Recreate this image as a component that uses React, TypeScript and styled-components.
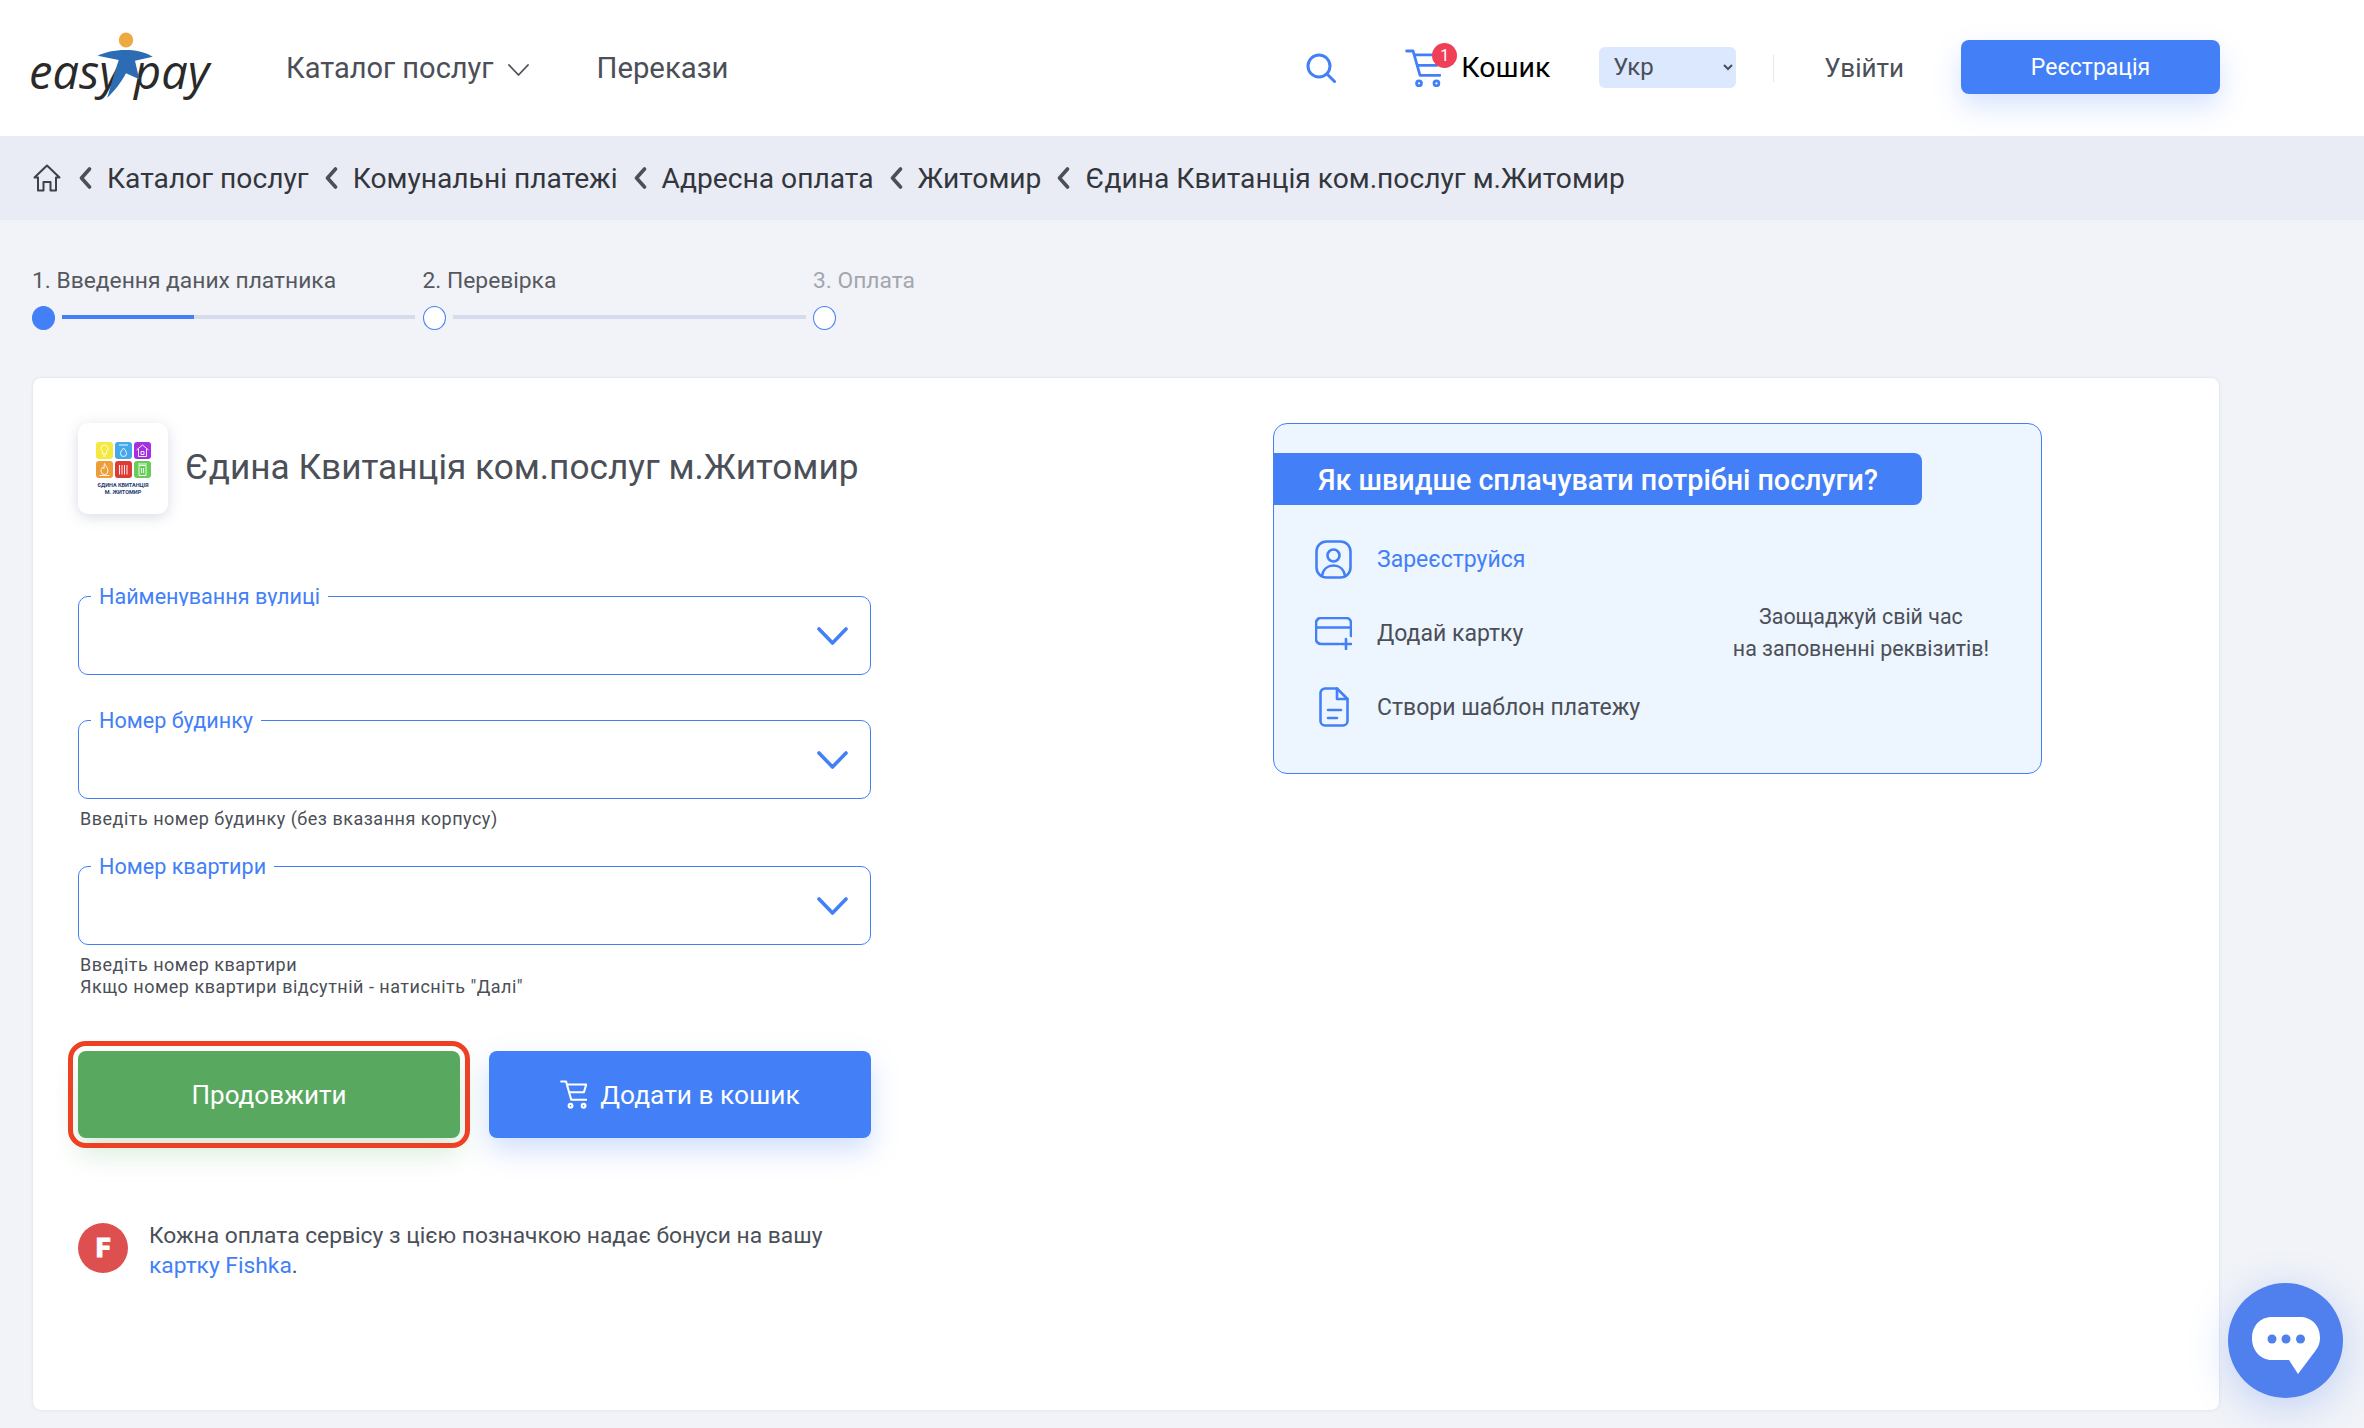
import * as React from 'react';
import styled, { createGlobalStyle } from 'styled-components';

const Global = createGlobalStyle`
    html, body {
        margin: 0;
        background: #f1f3f8;
        width: 2364px;
        height: 1428px;
        overflow: hidden;
    }
    * {
        box-sizing: border-box;
    }
    body {
        font-family: Roboto, 'Noto Sans', sans-serif;
        color: #4b4f57;
    }
`;

const BLUE = '#4380f7';

const CartGlyph = ({ color, size }: { color: string; size: number }) => (
    <svg width={size} height={size * 1.05} viewBox="0 0 36 38" fill="none" stroke={color} strokeWidth="2.8" strokeLinecap="round" strokeLinejoin="round">
        <path d="M1.5 2h6.5l7 24.500h20" />
        <path d="M9.500 6H35l-3 10.500H12.500" />
        <circle cx="14" cy="34.500" r="2.500" />
        <circle cx="31.500" cy="34.500" r="2.500" />
    </svg>
);

const Chevron = () => (
    <svg width="14" height="24" viewBox="0 0 14 24" fill="none" stroke="#4b4f57" strokeWidth="3.600" strokeLinecap="round" strokeLinejoin="round">
        <path d="M11.500 3L3.500 12l8 9" />
    </svg>
);

const SelectArrow = () => (
    <svg width="31" height="18" viewBox="0 0 31 18" fill="none" stroke={BLUE} strokeWidth="3.600" strokeLinecap="round" strokeLinejoin="round">
        <path d="M2 2l13.500 14L29 2" />
    </svg>
);

const tileIcons = [
    { color: '#f5e93f', d: 'M8.500 3a3.500 3.500 0 0 1 2 6.400V12h-4V9.400a3.500 3.500 0 0 1 2-6.400zM7 14h3' },
    { color: '#45a8e8', d: 'M4 3h9M8.500 6c2 2.400 3 4 3 5.500a3 3 0 0 1-6 0C5.500 10 6.500 8.400 8.500 6z' },
    { color: '#a42fe0', d: 'M2.500 8l6-5 6 5M4.500 7v7.500h8V7M7 9.500h3v3H7z' },
    { color: '#ee9d38', d: 'M8.500 2.500c1 3 3.500 4 3.500 7.500a3.500 3.500 0 0 1-7 0c0-2 1-2.500 1.500-4 .5 1 1 1.500 1.500 1.500 0-2 0-3.500.5-5zM3.500 14.500h10' },
    { color: '#df3b36', d: 'M4.500 4v9.500M7 4v9.500M9.500 4v9.500M12 4v9.500' },
    { color: '#67cd58', d: 'M5 4.500h7v10H5zM4 3h9M7.500 7v5M9.500 7v5' },
];

const App = () => (
    <>
        <Global />
        <Header>
            <Logo viewBox="0 0 180 88" width="180" height="88" aria-label="easypay">
                <LogoWord x="-3" y="65">easy</LogoWord>
                <LogoWord x="102" y="65">pay</LogoWord>
                <ellipse cx="94" cy="16" rx="7.200" ry="7.600" fill="#eeaa42" />
                <path d="M65.700 31.700C78 25.500 104 22.500 120.700 32.700L103 36.700L107.300 55.300L94 49.300C89 59 82 67.500 75.300 73.700C79 61 83 47 86.700 36Z" fill="#2c6cb4" />
            </Logo>
            <NavLink>Каталог послуг</NavLink>
            <NavCaret width="21" height="12" viewBox="0 0 21 12" fill="none" stroke="#4b4f57" strokeWidth="1.800" strokeLinecap="round" strokeLinejoin="round">
                <path d="M1 1l9.500 10L20 1" />
            </NavCaret>
            <NavTransfer>Перекази</NavTransfer>
            <HeaderRight>
                <svg width="30" height="30" viewBox="0 0 30 30" fill="none" stroke={BLUE} strokeWidth="3" strokeLinecap="round">
                    <circle cx="13" cy="13" r="11" />
                    <path d="M21 21l7.500 7.500" />
                </svg>
                <CartLink>
                    <CartGlyph color={BLUE} size={36} />
                    <Badge>1</Badge>
                    <CartText>Кошик</CartText>
                </CartLink>
                <Lang defaultValue="ua">
                    <option value="ua">Укр</option>
                </Lang>
                <HeaderDivider />
                <Login>Увійти</Login>
                <SignUp>Реєстрація</SignUp>
            </HeaderRight>
        </Header>

        <Crumbs>
            <HomeIcon width="28" height="28" viewBox="0 0 28 28" fill="none" stroke="#3d4148" strokeWidth="2" strokeLinecap="round" strokeLinejoin="round">
                <path d="M14 1.500L1.500 13.500H5V26.500H10.500V18H17.500V26.500H23V13.500H26.500Z" />
            </HomeIcon>
            {['Каталог послуг', 'Комунальні платежі', 'Адресна оплата', 'Житомир', 'Єдина Квитанція ком.послуг м.Житомир'].map((c) => (
                <React.Fragment key={c}>
                    <Chevron />
                    <Crumb>{c}</Crumb>
                </React.Fragment>
            ))}
        </Crumbs>

        <Steps>
            <Step>
                <StepLabel>1. Введення даних платника</StepLabel>
                <StepTrack>
                    <StepDot $active />
                    <StepLine $fill={37.500} />
                </StepTrack>
            </Step>
            <Step>
                <StepLabel>2. Перевірка</StepLabel>
                <StepTrack>
                    <StepDot />
                    <StepLine $fill={0} />
                </StepTrack>
            </Step>
            <Step>
                <StepLabel $muted>3. Оплата</StepLabel>
                <StepTrack>
                    <StepDot />
                </StepTrack>
            </Step>
        </Steps>

        <Card>
            <FormColumn>
                <ServiceHead>
                    <Tile>
                        <TileGrid>
                            {tileIcons.map((t) => (
                                <TileSwatch key={t.color} $color={t.color}>
                                    <svg width="17" height="17" viewBox="0 0 17 17" fill="none" stroke="#ffffff" strokeWidth="0.900" strokeLinejoin="round">
                                        <path d={t.d} />
                                    </svg>
                                </TileSwatch>
                            ))}
                        </TileGrid>
                        <TileText>
                            ЄДИНА КВИТАНЦІЯ
                            <br />
                            М. ЖИТОМИР
                        </TileText>
                    </Tile>
                    <ServiceTitle>Єдина Квитанція ком.послуг м.Житомир</ServiceTitle>
                </ServiceHead>

                <FieldGroup $top={82}>
                    <SelectBox>
                        <FloatLabel $clipped>Найменування вулиці</FloatLabel>
                        <SelectArrow />
                    </SelectBox>
                </FieldGroup>
                <FieldGroup $top={45}>
                    <SelectBox>
                        <FloatLabel>Номер будинку</FloatLabel>
                        <SelectArrow />
                    </SelectBox>
                    <Help>Введіть номер будинку (без вказання корпусу)</Help>
                </FieldGroup>
                <FieldGroup $top={36}>
                    <SelectBox>
                        <FloatLabel>Номер квартири</FloatLabel>
                        <SelectArrow />
                    </SelectBox>
                    <Help>
                        Введіть номер квартири
                        <br />
                        Якщо номер квартири відсутній - натисніть "Далі"
                    </Help>
                </FieldGroup>

                <Actions>
                    <ContinueButton>Продовжити</ContinueButton>
                    <AddButton>
                        <CartGlyph color="#ffffff" size={27} />
                        Додати в кошик
                    </AddButton>
                </Actions>

                <Bonus>
                    <BonusMark>F</BonusMark>
                    <BonusText>
                        Кожна оплата сервісу з цією позначкою надає бонуси на вашу <BonusLink>картку Fishka</BonusLink>.
                    </BonusText>
                </Bonus>
            </FormColumn>

            <Promo>
                <PromoBanner>Як швидше сплачувати потрібні послуги?</PromoBanner>
                <PromoBody>
                    <PromoList>
                        <PromoItem>
                            <PromoIcon>
                                <svg width="37" height="39" viewBox="0 0 37 39" fill="none" stroke={BLUE} strokeWidth="2.600">
                                    <rect x="1.500" y="1.500" width="34" height="36" rx="10" />
                                    <circle cx="18.500" cy="15.500" r="6" />
                                    <path d="M7 36c1-7 6-10.500 11.500-10.500S29 29 30 36" />
                                </svg>
                            </PromoIcon>
                            <PromoLink>Зареєструйся</PromoLink>
                        </PromoItem>
                        <PromoItem>
                            <PromoIcon>
                                <svg width="37" height="33" viewBox="0 0 37 33" fill="none" stroke={BLUE} strokeWidth="2.600" strokeLinecap="round" strokeLinejoin="round">
                                    <path d="M24 27H6a5 5 0 0 1-5-5V6a5 5 0 0 1 5-5h25a5 5 0 0 1 5 5v13" />
                                    <path d="M1 10.500h35" />
                                    <path d="M31 22v10M26 27h10" />
                                </svg>
                            </PromoIcon>
                            Додай картку
                        </PromoItem>
                        <PromoItem>
                            <PromoIcon>
                                <svg width="30" height="40" viewBox="0 0 30 40" fill="none" stroke={BLUE} strokeWidth="2.600" strokeLinecap="round" strokeLinejoin="round">
                                    <path d="M18 1.500H6a4.500 4.500 0 0 0-4.500 4.500v28A4.500 4.500 0 0 0 6 38.500h18a4.500 4.500 0 0 0 4.500-4.500V12z" />
                                    <path d="M18 1.500V12h10.500" />
                                    <path d="M9 23h13M9 31h9" />
                                </svg>
                            </PromoIcon>
                            Створи шаблон платежу
                        </PromoItem>
                    </PromoList>
                    <PromoNote>
                        Заощаджуй свій час
                        <br />
                        на заповненні реквізитів!
                    </PromoNote>
                </PromoBody>
            </Promo>
        </Card>

        <ChatButton>
            <svg width="70" height="59" viewBox="0 0 70 59" fill="none">
                <path d="M21 1H49C60 1 69 9 69 21.500C69 29 66 33 62 38L47 58L38 44H21C9 44 1 34 1 22.500C1 10 9 1 21 1Z" fill="#ffffff" />
                <circle cx="21" cy="23" r="4.500" fill="#4f80ee" />
                <circle cx="35" cy="23" r="4.500" fill="#4f80ee" />
                <circle cx="49.500" cy="23" r="4.500" fill="#4f80ee" />
            </svg>
        </ChatButton>
    </>
);

const Header = styled.header`
    position: relative;
    z-index: 2;
    height: 136px;
    display: flex;
    align-items: center;
    padding: 0 144px 0 32px;
    background: #ffffff;
`;

const Logo = styled.svg`
    flex: none;
    overflow: visible;
`;

const LogoWord = styled.text`
    font-family: 'Open Sans', sans-serif;
    font-style: italic;
    font-size: 47px;
    fill: #2a2a2a;
`;

const NavLink = styled.a`
    margin-left: 74px;
    font-size: 29px;
    color: #4b4f57;
`;

const NavCaret = styled.svg`
    margin-left: 15px;
    margin-top: 4px;
`;

const NavTransfer = styled.a`
    margin-left: 67px;
    font-size: 29.300px;
    color: #4b4f57;
`;

const HeaderRight = styled.div`
    margin-left: auto;
    display: flex;
    align-items: center;
`;

const CartLink = styled.div`
    position: relative;
    display: flex;
    align-items: center;
    margin-left: 69px;
`;

const Badge = styled.span`
    position: absolute;
    left: 27px;
    top: -6px;
    width: 25px;
    height: 25px;
    border-radius: 50%;
    background: #ef4058;
    color: #ffffff;
    font-size: 16px;
    line-height: 25px;
    text-align: center;
`;

const CartText = styled.span`
    margin-left: 20px;
    font-size: 28.500px;
    color: #000000;
`;

const Lang = styled.select`
    margin: 0 0 2px 49px;
    width: 137px;
    height: 41px;
    padding-left: 10px;
    border: none;
    border-radius: 6px;
    background-color: #dbe8fd;
    color: #4b4f57;
    font-family: Roboto, sans-serif;
    font-size: 24px;
`;

const HeaderDivider = styled.span`
    width: 1px;
    height: 27px;
    margin-left: 37px;
    background: #e2e6ef;
`;

const Login = styled.a`
    margin-left: 50px;
    font-size: 26px;
    color: #4b4f57;
`;

const SignUp = styled.button`
    margin: 0 0 2px 57px;
    width: 259px;
    height: 54px;
    border: none;
    border-radius: 8px;
    background: ${BLUE};
    color: #ffffff;
    font-family: Roboto, sans-serif;
    font-size: 23px;
    box-shadow: 0 12px 28px rgba(67, 128, 247, 0.22);
`;

const HomeIcon = styled.svg`
    flex: none;
    margin-right: 17px;
`;

const Crumbs = styled.nav`
    height: 84px;
    display: flex;
    align-items: center;
    padding-left: 33px;
    background: #e9ecf5;
`;

const Crumb = styled.a`
    margin: 0 15px;
    font-size: 28.200px;
    color: #33363c;
`;

const Steps = styled.div`
    display: flex;
    padding: 47px 0 0 32px;
    height: 158px;
`;

const Step = styled.div`
    width: 390.500px;
`;

const StepLabel = styled.div<{ $muted?: boolean }>`
    height: 28px;
    margin-bottom: 11px;
    font-size: 22.800px;
    line-height: 28px;
    color: ${({ $muted }) => ($muted ? '#a3a6ac' : '#55595f')};
`;

const StepTrack = styled.div`
    display: flex;
    align-items: center;
    gap: 7px;
`;

const StepDot = styled.span<{ $active?: boolean }>`
    flex: none;
    width: 23px;
    height: 24px;
    border-radius: 50%;
    border: 1px solid ${BLUE};
    background: ${({ $active }) => ($active ? BLUE : '#ffffff')};
`;

const StepLine = styled.span<{ $fill: number }>`
    width: 353px;
    height: 4px;
    margin-top: -3px;
    background: linear-gradient(90deg, ${BLUE} ${({ $fill }) => $fill}%, #d5dcec ${({ $fill }) => $fill}%);
`;

const Card = styled.main`
    display: flex;
    align-items: flex-start;
    width: 2186px;
    height: 1032px;
    margin-left: 33px;
    padding: 45px 0 0 45px;
    background: #ffffff;
    border-radius: 8px;
    box-shadow: 0 0 3px rgba(150, 160, 190, 0.3);
`;

const FormColumn = styled.div`
    flex: none;
    width: 793px;
`;

const ServiceHead = styled.div`
    display: flex;
    align-items: center;
    gap: 17px;
`;

const Tile = styled.div`
    flex: none;
    width: 90px;
    height: 91px;
    padding-top: 19px;
    border-radius: 10px;
    background: #ffffff;
    box-shadow: 0 3px 14px rgba(120, 130, 160, 0.28);
`;

const TileGrid = styled.div`
    display: grid;
    grid-template-columns: repeat(3, 17px);
    gap: 2px;
    justify-content: center;
`;

const TileSwatch = styled.div<{ $color: string }>`
    width: 17px;
    height: 17px;
    border-radius: 3px;
    background: ${({ $color }) => $color};
`;

const TileText = styled.div`
    margin-top: 4px;
    font-size: 5.500px;
    line-height: 7px;
    font-weight: 700;
    text-align: center;
    color: #1c3a70;
`;

const ServiceTitle = styled.h1`
    margin: 0 0 4px;
    font-size: 35.200px;
    font-weight: 400;
    color: #4b4f57;
`;

const FieldGroup = styled.div<{ $top: number }>`
    margin-top: ${({ $top }) => $top}px;
`;

const SelectBox = styled.div`
    position: relative;
    display: flex;
    align-items: center;
    justify-content: flex-end;
    height: 79px;
    padding-right: 22px;
    border: 1px solid ${BLUE};
    border-radius: 10px;
`;

const FloatLabel = styled.label<{ $clipped?: boolean }>`
    position: absolute;
    left: 12px;
    top: -11px;
    height: ${({ $clipped }) => ($clipped ? '20px' : '26px')};
    overflow: hidden;
    padding: 0 8px;
    background: #ffffff;
    font-size: 21.600px;
    line-height: 22px;
    color: ${BLUE};
`;

const Help = styled.div`
    margin: 9px 0 0 2px;
    font-size: 18px;
    line-height: 22px;
    letter-spacing: 0.500px;
    color: #4b4f57;
`;

const Actions = styled.div`
    display: flex;
    gap: 29px;
    margin-top: 53px;
`;

const ContinueButton = styled.button`
    width: 382px;
    height: 87px;
    border: none;
    border-radius: 8px;
    background: #58a85f;
    color: #ffffff;
    font-family: Roboto, sans-serif;
    font-size: 26px;
    outline: 5px solid #ee4124;
    outline-offset: 5px;
    box-shadow: 0 16px 28px rgba(88, 168, 95, 0.22);
`;

const AddButton = styled.button`
    display: flex;
    align-items: center;
    justify-content: center;
    gap: 13px;
    width: 382px;
    height: 87px;
    border: none;
    border-radius: 8px;
    background: ${BLUE};
    color: #ffffff;
    font-family: Roboto, sans-serif;
    font-size: 26.300px;
    box-shadow: 0 12px 28px rgba(67, 128, 247, 0.25);
`;

const Bonus = styled.div`
    display: flex;
    gap: 21px;
    margin-top: 85px;
`;

const BonusMark = styled.span`
    flex: none;
    width: 50px;
    height: 50px;
    border-radius: 50%;
    background: #de5050;
    color: #ffffff;
    font-size: 26px;
    font-weight: 900;
    line-height: 50px;
    text-align: center;
    -webkit-text-stroke: 1px #ffffff;
`;

const BonusText = styled.p`
    margin: -2px 0 0;
    font-size: 22.800px;
    line-height: 30px;
    color: #4b4f57;
`;

const BonusLink = styled.a`
    color: ${BLUE};
`;

const Promo = styled.aside`
    flex: none;
    width: 769px;
    height: 351px;
    margin-left: 402px;
    padding-top: 29px;
    border: 1px solid ${BLUE};
    border-radius: 14px;
    background: #edf5fe;
`;

const PromoBanner = styled.div`
    width: 648px;
    height: 52px;
    padding-left: 44px;
    border-radius: 0 8px 8px 0;
    background: ${BLUE};
    color: #ffffff;
    font-size: 28.700px;
    font-weight: 500;
    line-height: 54px;
`;

const PromoBody = styled.div`
    display: flex;
    align-items: center;
    justify-content: space-between;
    padding: 32px 52px 0 41px;
`;

const PromoList = styled.div`
    display: flex;
    flex-direction: column;
    gap: 30px;
`;

const PromoItem = styled.div`
    display: flex;
    align-items: center;
    gap: 25px;
    height: 44px;
    font-size: 23px;
    color: #4b4f57;
`;

const PromoIcon = styled.span`
    display: flex;
    justify-content: center;
    width: 37px;
`;

const PromoLink = styled.a`
    color: ${BLUE};
`;

const PromoNote = styled.p`
    margin: 0;
    font-size: 21.400px;
    line-height: 32px;
    text-align: center;
    color: #4b4f57;
`;

const ChatButton = styled.button`
    position: fixed;
    left: 2228px;
    top: 1283px;
    display: flex;
    align-items: center;
    justify-content: center;
    width: 115px;
    height: 115px;
    padding: 10px 0 0;
    border: none;
    border-radius: 50%;
    background: #4f80ee;
    box-shadow: 0 8px 40px rgba(79, 128, 238, 0.3);
`;

export default App;
